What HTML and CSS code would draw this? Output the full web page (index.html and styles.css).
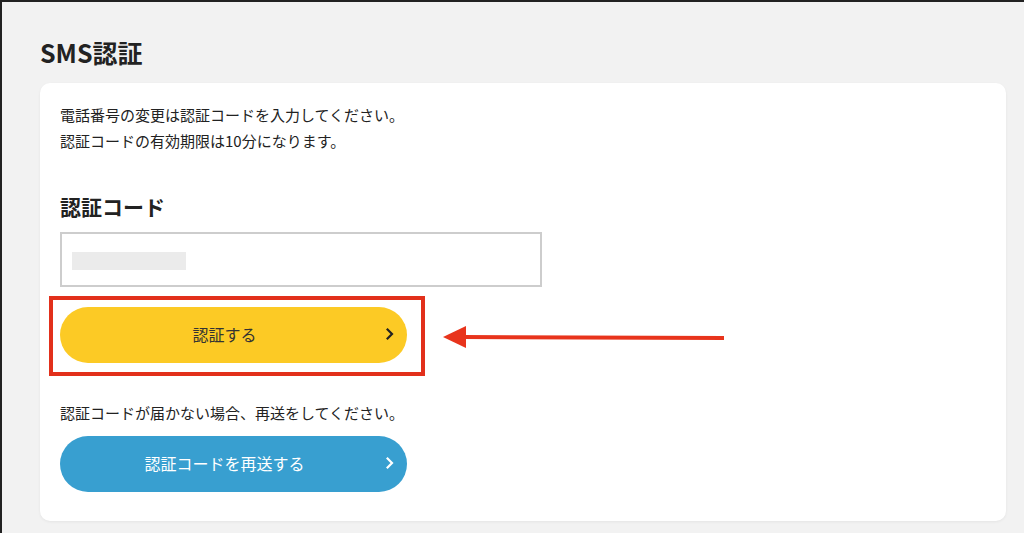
FILE: index.html
```html
<!DOCTYPE html>
<html lang="ja">
<head>
  <meta charset="UTF-8">
  <title>SMS認証</title>
  <link rel="stylesheet" href="styles.css">
</head>
<body>
  <div class="page">
    <h1 class="page-title">SMS認証</h1>

    <div class="card">
      <p class="note">電話番号の変更は認証コードを入力してください。<br>認証コードの有効期限は10分になります。</p>

      <h2 class="field-label">認証コード</h2>
      <div class="code-input">
        <span class="code-mask"></span>
      </div>

      <div class="verify-row">
        <button class="btn btn-yellow">
          <span class="btn-text">認証する</span>
          <svg class="chevron" width="9" height="14" viewBox="0 0 9 14"><path d="M1.8 1.8 L7 7 L1.8 12.2" fill="none" stroke="#222" stroke-width="2.2"/></svg>
        </button>
        <!-- annotation overlay -->
        <div class="highlight"></div>
        <svg class="arrow" width="282" height="24" viewBox="0 0 282 24">
          <polygon points="0,12 23,1 23,23" fill="#e8341c"/>
          <line x1="20" y1="12" x2="281" y2="13" stroke="#e8341c" stroke-width="4"/>
        </svg>
      </div>

      <p class="resend-note">認証コードが届かない場合、再送をしてください。</p>
      <button class="btn btn-blue">
        <span class="btn-text">認証コードを再送する</span>
        <svg class="chevron" width="9" height="14" viewBox="0 0 9 14"><path d="M1.8 1.8 L7 7 L1.8 12.2" fill="none" stroke="#fff" stroke-width="2.2"/></svg>
      </button>
    </div>
  </div>
</body>
</html>
```

FILE: styles.css
```css
* {
  box-sizing: border-box;
}

body {
  margin: 0;
  height: 533px;
  background: #f2f2f2;
  border-top: 2px solid #222;
  border-left: 2px solid #222;
  font-family: "Noto Sans CJK JP", "Noto Sans", sans-serif;
  color: #222;
  overflow: hidden;
}

.page {
  padding: 0 18px 0 38px;
}

.page-title {
  margin: 0;
  padding-top: 34px;
  font-size: 25px;
  line-height: 32px;
  font-weight: 700;
  height: 81px;
}

.card {
  background: #fff;
  border-radius: 10px;
  box-shadow: 0 1px 3px rgba(0, 0, 0, 0.06);
  padding: 19px 20px 29px;
}

.note {
  margin: 0;
  font-size: 15px;
  line-height: 26px;
  color: #222;
}

.field-label {
  margin: 37px 0 0;
  font-size: 21px;
  line-height: 30px;
  font-weight: 700;
}

.code-input {
  margin-top: 11px;
  width: 482px;
  height: 55px;
  border: 2px solid #cdcdcd;
  padding: 18px 0 0 10px;
}

.code-mask {
  display: block;
  width: 114px;
  height: 18px;
  background: #ebebeb;
}

.verify-row {
  position: relative;
  margin-top: 20px;
}

.btn {
  display: flex;
  align-items: center;
  width: 347px;
  height: 56px;
  padding: 0 13px 2px 4px;
  border: none;
  border-radius: 28px;
  font-family: inherit;
  font-size: 16px;
  cursor: pointer;
}

.btn-text {
  flex: 1;
  text-align: center;
}

.btn-yellow {
  background: #fcca25;
  color: #333;
}

.btn-blue {
  margin-top: 10px;
  background: #389fd0;
  color: #fff;
}

.highlight {
  position: absolute;
  left: -11px;
  top: -11px;
  width: 376px;
  height: 80px;
  border: 4px solid #e2301b;
}

.arrow {
  position: absolute;
  left: 383px;
  top: 18px;
}

.resend-note {
  margin: 37px 0 0;
  font-size: 15px;
  line-height: 26px;
}
```
